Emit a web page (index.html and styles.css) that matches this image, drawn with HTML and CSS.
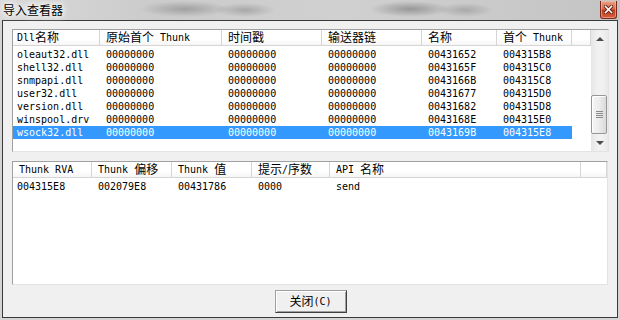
FILE: index.html
```html
<!DOCTYPE html>
<html lang="zh-CN">
<head>
    <meta charset="UTF-8">
    <meta name="viewport" content="width=device-width, initial-scale=1.0">
    <title>导入查看器</title>
    <link rel="stylesheet" href="styles.css">
</head>
<body>
<div class="window">
    <div class="titlebar">
        <span class="title">导入查看器</span>
        <button class="close-btn" aria-label="关闭">
            <svg width="9" height="9" viewBox="0 0 9 9">
                <path d="M1.5 1.5 L7.5 7.5 M7.5 1.5 L1.5 7.5" stroke="#5a1a10" stroke-width="3.2" stroke-linecap="square"/>
                <path d="M1.5 1.5 L7.5 7.5 M7.5 1.5 L1.5 7.5" stroke="#fff" stroke-width="1.6" stroke-linecap="square"/>
            </svg>
        </button>
    </div>

    <div class="frame">
        <!-- imported modules -->
        <div class="listview imports">
            <div class="lv-main">
                <div class="lv-header">
                    <div class="hd">Dll<span class="zh">名称</span></div>
                    <div class="hd"><span class="zh">原始首个</span> Thunk</div>
                    <div class="hd"><span class="zh">时间戳</span></div>
                    <div class="hd"><span class="zh">输送器链</span></div>
                    <div class="hd"><span class="zh">名称</span></div>
                    <div class="hd"><span class="zh">首个</span> Thunk</div>
                    <div class="hd"></div>
                </div>
                <div class="lv-rows">
                    <div class="row"><div>oleaut32.dll</div><div>00000000</div><div>00000000</div><div>00000000</div><div>00431652</div><div>004315B8</div></div>
                    <div class="row"><div>shell32.dll</div><div>00000000</div><div>00000000</div><div>00000000</div><div>0043165F</div><div>004315C0</div></div>
                    <div class="row"><div>snmpapi.dll</div><div>00000000</div><div>00000000</div><div>00000000</div><div>0043166B</div><div>004315C8</div></div>
                    <div class="row"><div>user32.dll</div><div>00000000</div><div>00000000</div><div>00000000</div><div>00431677</div><div>004315D0</div></div>
                    <div class="row"><div>version.dll</div><div>00000000</div><div>00000000</div><div>00000000</div><div>00431682</div><div>004315D8</div></div>
                    <div class="row"><div>winspool.drv</div><div>00000000</div><div>00000000</div><div>00000000</div><div>0043168E</div><div>004315E0</div></div>
                    <div class="row selected"><div>wsock32.dll</div><div>00000000</div><div>00000000</div><div>00000000</div><div>0043169B</div><div>004315E8</div></div>
                </div>
            </div>
            <div class="scrollbar">
                <div class="sb-btn"><span class="arrow up"></span></div>
                <div class="sb-track"><div class="sb-thumb"><span class="grip"></span></div></div>
                <div class="sb-btn"><span class="arrow down"></span></div>
            </div>
        </div>

        <!-- thunks of selected module -->
        <div class="listview thunks">
            <div class="lv-main">
                <div class="lv-header">
                    <div class="hd">Thunk RVA</div>
                    <div class="hd">Thunk <span class="zh">偏移</span></div>
                    <div class="hd">Thunk <span class="zh">值</span></div>
                    <div class="hd"><span class="zh">提示</span>/<span class="zh">序数</span></div>
                    <div class="hd">API <span class="zh">名称</span></div>
                    <div class="hd"></div>
                </div>
                <div class="lv-rows">
                    <div class="row"><div>004315E8</div><div>002079E8</div><div>00431786</div><div>0000</div><div>send</div></div>
                </div>
            </div>
        </div>

        <div class="actions">
            <button class="push-btn"><span class="zh">关闭</span>(C)</button>
        </div>
    </div>
</div>
</body>
</html>
```

FILE: styles.css
```css
html, body {
    margin: 0;
    padding: 0;
}

body {
    width: 620px;
    height: 320px;
    overflow: hidden;
    font-family: "DejaVu Sans Mono", "Noto Sans CJK SC", monospace;
    font-size: 10px;
    color: #000;
}

.zh {
    font-family: "Noto Sans CJK SC", sans-serif;
    font-size: 12px;
    line-height: 1;
    vertical-align: -1px;
}

.window {
    width: 620px;
    height: 320px;
    background: #d4d4d4;
}

/* glass title bar */
.titlebar {
    height: 20px;
    display: flex;
    align-items: flex-start;
    justify-content: space-between;
    background:
        radial-gradient(ellipse 45px 8px at 185px 9px, rgba(80, 80, 80, 0.35), transparent),
        radial-gradient(ellipse 30px 7px at 245px 10px, rgba(80, 80, 80, 0.3), transparent),
        radial-gradient(ellipse 40px 8px at 410px 9px, rgba(70, 70, 70, 0.4), transparent),
        radial-gradient(ellipse 28px 7px at 465px 10px, rgba(70, 70, 70, 0.25), transparent),
        linear-gradient(to right, #d9d9d9 0%, #cbcbcb 25%, #d0d0d0 55%, #c4c4c4 100%);
}

.title {
    font-family: "Noto Sans CJK SC", sans-serif;
    font-size: 12px;
    line-height: 20px;
    padding-left: 3px;
    color: #000;
    text-shadow: 0 0 4px #fff, 0 0 8px #fff, 0 0 8px #fff;
}

.close-btn {
    width: 17px;
    height: 18px;
    margin: 1px 3px 0 0;
    padding: 0;
    border: 1px solid #7a2a1c;
    border-top: none;
    border-radius: 0 0 3px 3px;
    background: linear-gradient(to bottom, #e8a48c 0%, #d8684a 45%, #c43c1e 55%, #d2613e 100%);
    box-shadow: inset 0 0 0 1px rgba(255, 200, 180, 0.5);
    display: flex;
    align-items: center;
    justify-content: center;
}

.frame {
    box-sizing: border-box;
    height: 298px;
    margin: 0 2px;
    border: 1px solid #3a3a3a;
    background: #f0f0f0;
    padding: 8px 8px 0 9px;
    display: flex;
    flex-direction: column;
}

/* list views */
.listview {
    box-sizing: border-box;
    background: #fff;
    border: 1px solid;
    border-color: #a0a0a0 #e3e3e3 #e3e3e3 #a0a0a0;
    display: flex;
}

.imports {
    width: 597px;
    height: 123px;
}

.thunks {
    width: 596px;
    height: 124px;
    margin-top: 9px;
}

.lv-main {
    flex: 1;
    min-width: 0;
}

.lv-header {
    display: grid;
    height: 16px;
    box-sizing: border-box;
    border-bottom: 1px solid #d5d5d5;
    background: linear-gradient(to bottom, #fff 0%, #fff 60%, #f6f6f6 100%);
}

.imports .lv-header {
    grid-template-columns: 87px 122px 100px 100px 75px 75px 1fr;
}

.thunks .lv-header {
    grid-template-columns: 79px 80px 80px 78px 251px 1fr;
}

.hd {
    border-right: 1px solid #d5d5d5;
    line-height: 15px;
    padding-left: 6px;
    white-space: nowrap;
}

.imports .hd:first-child {
    padding-left: 4px;
}

.lv-rows {
    padding-top: 2px;
}

.row {
    display: grid;
    height: 13px;
    line-height: 13px;
    width: max-content;
}

.imports .row {
    grid-template-columns: 87px 122px 100px 100px 75px 75px;
}

.thunks .row {
    grid-template-columns: 79px 80px 80px 78px 251px;
}

.row div {
    padding-left: 6px;
    white-space: nowrap;
}

.row div:first-child {
    padding-left: 4px;
}

.row.selected {
    background: #3399ff;
    color: #fff;
}

/* scrollbar */
.scrollbar {
    width: 17px;
    display: flex;
    flex-direction: column;
    background: linear-gradient(to right, #e6e6e6 0%, #f1f1f1 40%, #f1f1f1 70%, #e8e8e8 100%);
}

.sb-btn {
    height: 17px;
    display: flex;
    align-items: center;
    justify-content: center;
}

.arrow {
    width: 0;
    height: 0;
    border-left: 4px solid transparent;
    border-right: 4px solid transparent;
}

.arrow.up {
    border-bottom: 4px solid #4d4d4d;
}

.arrow.down {
    border-top: 4px solid #4d4d4d;
}

.sb-track {
    flex: 1;
    display: flex;
    flex-direction: column;
    justify-content: flex-end;
}

.sb-thumb {
    height: 39px;
    box-sizing: border-box;
    margin: 0 1px 0 0;
    border: 1px solid #979797;
    border-radius: 2px;
    background: linear-gradient(to right, #f5f5f5 0%, #ececec 50%, #dadada 100%);
    box-shadow: inset 1px 1px 0 #fff;
    display: flex;
    align-items: center;
    justify-content: center;
}

.grip {
    width: 7px;
    height: 7px;
    background: repeating-linear-gradient(to bottom, #8a8a8a 0, #8a8a8a 1px, transparent 1px, transparent 2px);
}

/* dialog buttons */
.actions {
    display: flex;
    justify-content: center;
    margin-top: 5px;
}

.push-btn {
    width: 72px;
    height: 23px;
    padding: 0;
    font-family: "DejaVu Sans Mono", "Noto Sans CJK SC", monospace;
    font-size: 10px;
    color: #000;
    background: #f0f0f0;
    border: 1px solid;
    border-color: #a0a0a0 #404040 #404040 #a0a0a0;
    box-shadow: inset 1px 1px 0 #fff, inset -1px -1px 0 #a0a0a0;
    line-height: 21px;
}
```
